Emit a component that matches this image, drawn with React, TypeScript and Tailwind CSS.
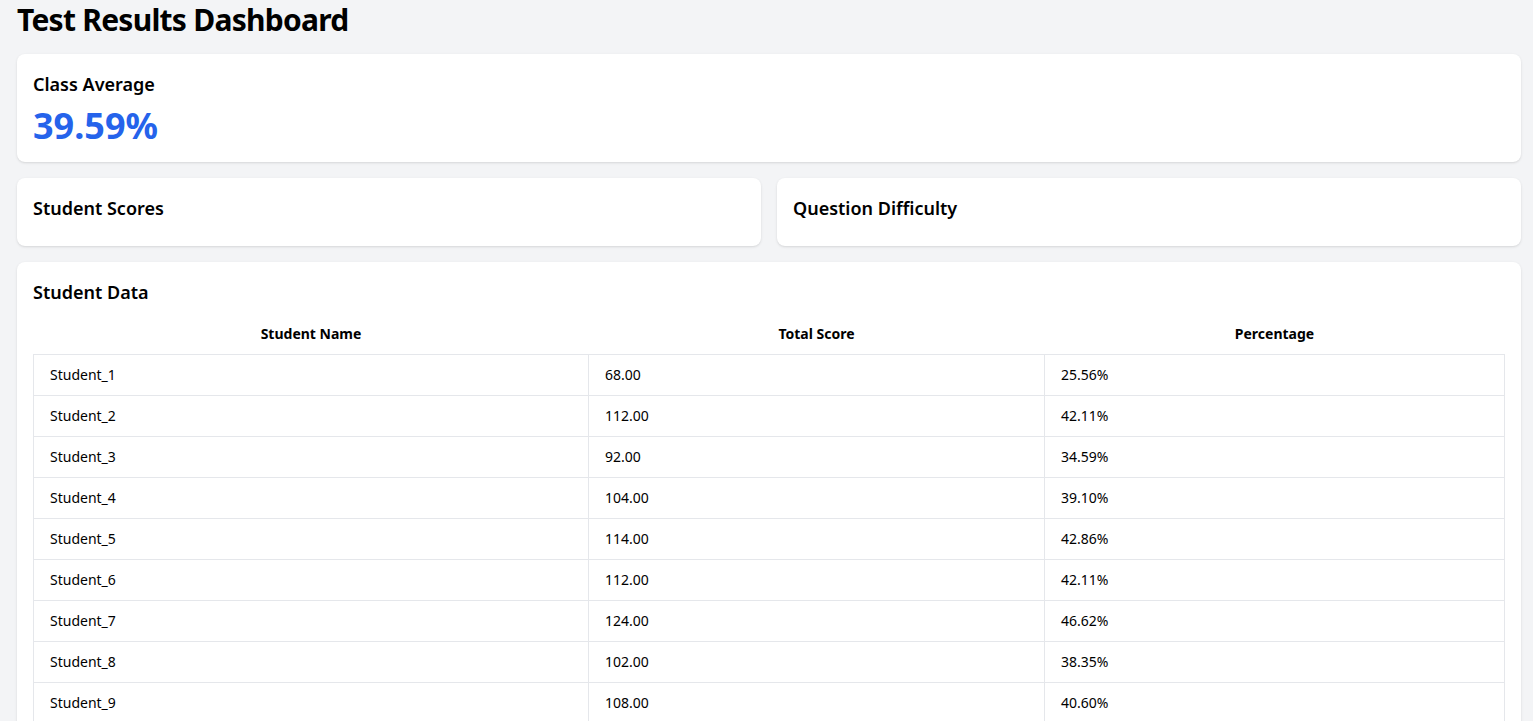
const students = [
  { name: "Student_1", total: "68.00", pct: "25.56%" },
  { name: "Student_2", total: "112.00", pct: "42.11%" },
  { name: "Student_3", total: "92.00", pct: "34.59%" },
  { name: "Student_4", total: "104.00", pct: "39.10%" },
  { name: "Student_5", total: "114.00", pct: "42.86%" },
  { name: "Student_6", total: "112.00", pct: "42.11%" },
  { name: "Student_7", total: "124.00", pct: "46.62%" },
  { name: "Student_8", total: "102.00", pct: "38.35%" },
  { name: "Student_9", total: "108.00", pct: "40.60%" },
];

export default function App() {
  return (
    <div className="min-h-screen bg-gray-100 pl-[17px] pr-3 pt-0.5 pb-4 text-black font-['Noto_Sans',sans-serif]">
      <h1 className="text-3xl font-bold tracking-tight mb-4">Test Results Dashboard</h1>

      {/* Class average */}
      <div className="bg-white rounded-lg shadow-sm p-4 mb-4">
        <h2 className="text-lg font-semibold mb-2">Class Average</h2>
        <p className="text-4xl font-bold text-[#2563eb]">39.59%</p>
      </div>

      {/* Charts */}
      <div className="grid grid-cols-2 gap-4 mb-4">
        <div className="bg-white rounded-lg shadow-sm p-4">
          <h2 className="text-lg font-semibold mb-2">Student Scores</h2>
        </div>
        <div className="bg-white rounded-lg shadow-sm p-4">
          <h2 className="text-lg font-semibold mb-2">Question Difficulty</h2>
        </div>
      </div>

      {/* Table */}
      <div className="bg-white rounded-lg shadow-sm p-4">
        <h2 className="text-lg font-semibold mb-2">Student Data</h2>
        <table className="w-full table-fixed text-sm">
          <thead>
            <tr>
              <th className="w-[555px] py-2.5 px-4 font-bold">Student Name</th>
              <th className="w-[456px] py-2.5 px-4 font-bold">Total Score</th>
              <th className="py-2.5 px-4 font-bold">Percentage</th>
            </tr>
          </thead>
          <tbody>
            {students.map((s) => (
              <tr key={s.name}>
                <td className="border border-gray-200 px-4 py-2.5">{s.name}</td>
                <td className="border border-gray-200 px-4 py-2.5">{s.total}</td>
                <td className="border border-gray-200 px-4 py-2.5">{s.pct}</td>
              </tr>
            ))}
          </tbody>
        </table>
      </div>
    </div>
  );
}
